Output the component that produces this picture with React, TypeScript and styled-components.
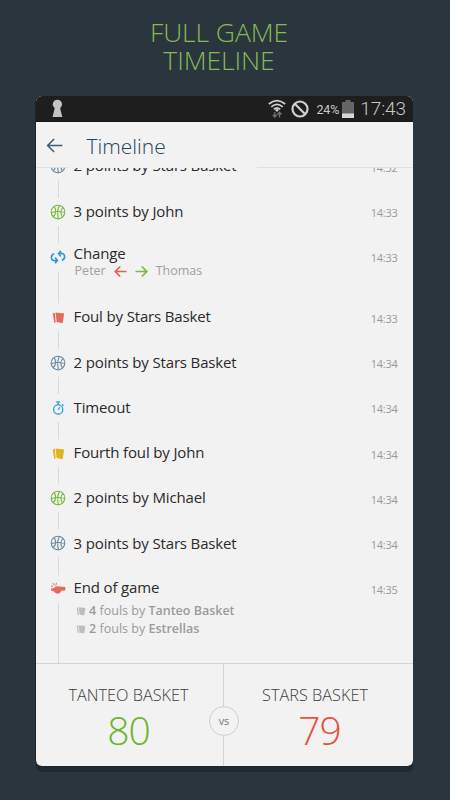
import React from 'react';
import styled, { createGlobalStyle } from 'styled-components';

const GlobalStyle = createGlobalStyle`
  * { box-sizing: border-box; }
  body { margin: 0; background: #2b353e; font-family: "Open Sans", sans-serif; }
`;

const Page = styled.main`
  width: 450px;
  height: 800px;
  overflow: hidden;
  background: #2b353e;
  display: flex;
  flex-direction: column;
  align-items: center;
`;

const Headline = styled.h1`
  margin: 0;
  height: 96px;
  padding-top: 18px;
  color: #84ba55;
  font-size: 26.5px;
  font-weight: 300;
  line-height: 28px;
  text-align: center;
  letter-spacing: -0.1px;
  padding-right: 12px;
`;

const Phone = styled.section`
  width: 377px;
  height: 670px;
  display: flex;
  flex-direction: column;
  overflow: hidden;
  flex: none;
  border-radius: 6px;
  background: #f2f2f2;
`;

const Shadow = styled.div`
  border-radius: 6px;
  margin-right: 1px;
  box-shadow: 0 6px 0 #202930, 0 1px 0 #121c25, -1px 0 0 #1a242c;
`;

const StatusBar = styled.div`
  height: 26px;
  flex: none;
  background: #1e1e1e;
  border-bottom: 1px solid #151515;
  color: #c8c8c8;
  display: flex;
  align-items: center;
  font-family: Roboto, sans-serif;
  padding: 0 7px 0 16px;
`;

const Spacer = styled.span`
  flex: 1;
`;

const Percent = styled.span`
  font-size: 12.5px;
  margin: 1px 3px 0 7px;
  letter-spacing: -0.1px;
`;

const Clock = styled.span`
  font-size: 19px;
  font-weight: 300;
  margin-left: 6px;
  letter-spacing: -0.1px;
  line-height: 24px;
`;

const AppBar = styled.header`
  height: 45px;
  flex: none;
  display: flex;
  align-items: center;
  padding: 2px 0 0 10px;
  gap: 23.5px;
  color: #24455e;
`;

const Title = styled.h2`
  margin: 0;
  font-size: 21px;
  font-weight: 300;
  line-height: 28px;
`;

const Divider = styled.div`
  height: 1px;
  flex: none;
  background: linear-gradient(90deg, #e0e0e0 33px, transparent 33px 221px, #e0e0e0 221px);
`;

const List = styled.div`
  flex: 1;
  min-height: 0;
  overflow: hidden;
`;

const Row = styled.div<{ $height: number; $first?: boolean }>`
  display: grid;
  grid-template-columns: 37.6px 1fr auto;
  height: ${(p) => p.$height}px;
  margin-top: ${(p) => (p.$first ? -24.7 : 0)}px;
  padding-right: 15.5px;
`;

const Rail = styled.div`
  width: 44px;
  display: flex;
  flex-direction: column;
  align-items: center;
  &::before, &::after {
    content: "";
    width: 1px;
    background: #d3dbe1;
  }
  &::before { height: 9px; }
  &::after { flex: 1; }
`;

const IconBox = styled.div`
  height: 28px;
  display: flex;
  align-items: center;
  justify-content: center;
`;

const Body = styled.div<{ $lift: number }>`
  padding-top: ${(p) => 12.1 - p.$lift}px;
`;

const Label = styled.div`
  font-size: 15px;
  line-height: 21px;
  color: #2a2a2a;
  white-space: nowrap;
  letter-spacing: -0.15px;
`;

const Time = styled.time`
  font-size: 11px;
  line-height: 16px;
  padding-top: 16.5px;
  color: #999;
  letter-spacing: -0.25px;
`;

const Swap = styled.div`
  display: flex;
  align-items: center;
  gap: 8px;
  padding-left: 1px;
  margin-top: -2px;
  color: #a0a0a0;
  font-size: 12.5px;
  line-height: 18px;
`;

const Note = styled.div`
  display: flex;
  align-items: center;
  gap: 3px;
  padding-left: 2.5px;
  font-size: 12.5px;
  line-height: 18px;
  color: #9b9b9b;
  b { font-weight: 600; }
`;

const Notes = styled.div`
  margin-top: 3.5px;
`;

const Score = styled.footer`
  height: 103px;
  flex: none;
  border-top: 1px solid #d4d4d4;
  display: grid;
  grid-template-columns: 187px 1px 189px;
  position: relative;
`;

const Team = styled.div<{ $left?: boolean }>`
  display: flex;
  flex-direction: column;
  align-items: center;
  padding-top: 20px;
  padding-right: ${(p) => (p.$left ? 2 : 7)}px;
`;

const TeamName = styled.div`
  color: #3c3c3c;
  font-size: 16.3px;
  font-weight: 300;
  line-height: 22px;
`;

const Points = styled.div<{ $color: string; $shift?: number }>`
  color: ${(p) => p.$color};
  font-size: 39px;
  font-weight: 300;
  line-height: 48px;
  letter-spacing: -1px;
  padding-left: ${(p) => p.$shift ?? 0}px;
`;

const Split = styled.div`
  background: #d4d4d4;
`;

const Versus = styled.div`
  position: absolute;
  left: 173px;
  top: 42px;
  width: 30px;
  height: 30px;
  border: 1px solid #cfcfcf;
  border-radius: 50%;
  background: #f2f2f2;
  color: #777;
  font-size: 11px;
  line-height: 28px;
  text-align: center;
`;

const GREEN = '#78b93e';
const SLATE = '#6e8ba3';
const RED = '#e66a5c';

const Ball = ({ color }: { color: string }) => (
  <svg width="16" height="16" viewBox="0 0 16 16" fill="none" stroke={color} strokeWidth="1.15">
    <circle cx="8" cy="8" r="6.8" />
    <path d="M9.5 1.3C7.5 5 7.5 11 8.5 14.7M1.3 8.7C5 7.4 11 7.4 14.8 8.3M4 2.6C6.8 5.6 6 10.4 3.1 12.8M13 3.3C10.2 5.9 10.4 10.8 12.6 13" />
  </svg>
);

const Cards = ({ color, size = 13 }: { color: string; size?: number }) => (
  <svg width={size} height={size} viewBox="0 0 13 13" fill={color}>
    <path d="M3.6 1.6 12.2 2.6 10.6 12.2 4.6 11Z" />
    <path d="M.8 2.4 2.8 1.8 3.7 10.9 3.4 11.6 2.2 11.8Z" />
  </svg>
);

const Change = () => (
  <svg width="16" height="14" viewBox="0 0 16 14" fill="none" stroke="#2f95d3" strokeWidth="1.6">
    <path d="M4.2 3.8C.6 4.6.5 9.6 3.6 10.6H7M5.2 7.6 7.4 10.4 5.2 13.2M11.8 10.2C15.4 9.4 15.5 4.4 12.4 3.4H9M10.8.8 8.6 3.6 10.8 6.4" />
  </svg>
);

const Stopwatch = () => (
  <svg width="13" height="14" viewBox="0 0 13 14" fill="none" stroke="#38a5e3" strokeWidth="1.4">
    <circle cx="6.2" cy="8.4" r="4.6" />
    <path d="M4.2 1H8.2M6.2 1V3.8M10 3.2 11.5 4.7M6 8.6 8 6.3" />
  </svg>
);

const Whistle = ({ color }: { color: string }) => (
  <svg width="16" height="13" viewBox="0 0 16 13">
    <path d="M6 4.2 15.3 5V8.4L11.2 8.7C10.6 12.4 5.4 12.8 4.3 9.6L1 8.4V6.6L3.6 6.2Z" fill={color} />
    <path d="M1 3.7 3 5M3.1 1 4.3 3.5M6.5.8 5.8 3.4" stroke={color} strokeWidth="1" />
  </svg>
);

const Arrow = ({ color, flip, size = 13, weight = 1.7 }: { color: string; flip?: boolean; size?: number; weight?: number }) => (
  <svg width={size} height={size} viewBox="0 0 13 13" fill="none" stroke={color} strokeWidth={weight}>
    <path d={flip ? 'M.5 6.5H11.8M6.8 1.5 11.8 6.5 6.8 11.5' : 'M12.5 6.5H1.2M6.2 1.5 1.2 6.5 6.2 11.5'} />
  </svg>
);

const Keyhole = () => (
  <svg width="11" height="19" viewBox="0 0 11 19" fill="#c4c4c4">
    <circle cx="5.4" cy="5.3" r="4.6" />
    <path d="M3 8H7.8L10.3 18H.5Z" />
  </svg>
);

const Wifi = () => (
  <svg width="18" height="20" viewBox="0 0 18 20" fill="none" stroke="#d0d0d0" strokeWidth="1.7">
    <path d="M.8 5Q9-1.8 17.2 5M3.3 7.8Q9 2.8 14.7 7.8M5.8 10.3Q9 7.5 12.2 10.3" />
    <path d="M7 11 9 9.5 11 11 9 13Z" fill="#d0d0d0" stroke="none" />
    <path d="M6.8 13V18M4.8 15.8 6.8 18 8.8 15.8M11.5 18.5V13.5M9.5 15.5 11.5 13.3 13.5 15.5" stroke="#737373" strokeWidth="1.3" />
  </svg>
);

const Blocked = styled.svg`
  margin-left: 5px;
`;

const Battery = () => (
  <svg width="12" height="18" viewBox="0 0 12 18">
    <path d="M3.5 0H8.5V2H12V18H0V2H3.5Z" fill="#656565" />
    <path d="M0 13.5H12V18H0Z" fill="#d7d7d7" />
  </svg>
);

interface Entry {
  text: string;
  time: string;
  icon: React.ReactNode;
  height: number;
  lift?: number;
  detail?: React.ReactNode;
}

const entries: Entry[] = [
  { text: '2 points by Stars Basket', time: '14:32', icon: <Ball color={SLATE} />, height: 45.2, lift: 0.8 },
  { text: '3 points by John', time: '14:33', icon: <Ball color={GREEN} />, height: 45.3 },
  {
    text: 'Change', time: '14:33', icon: <Change />, height: 60.5, lift: 2.4,
    detail: (
      <Swap>
        Peter <Arrow color="#e5604f" /> <Arrow color="#78b93e" flip /> Thomas
      </Swap>
    ),
  },
  { text: 'Foul by Stars Basket', time: '14:33', icon: <Cards color={RED} />, height: 45.3 },
  { text: '2 points by Stars Basket', time: '14:34', icon: <Ball color={SLATE} />, height: 45.3, lift: -0.3 },
  { text: 'Timeout', time: '14:34', icon: <Stopwatch />, height: 45.2 },
  { text: 'Fourth foul by John', time: '14:34', icon: <Cards color="#e2b31a" />, height: 45.2 },
  { text: '2 points by Michael', time: '14:34', icon: <Ball color={GREEN} />, height: 45.2 },
  { text: '3 points by Stars Basket', time: '14:34', icon: <Ball color={SLATE} />, height: 45.3, lift: -0.3 },
  {
    text: 'End of game', time: '14:35', icon: <Whistle color={RED} />, height: 98, lift: 0.6,
    detail: (
      <Notes>
        <Note><Cards color="#bdbdbd" size={10} /><span><b>4</b> fouls by <b>Tanteo Basket</b></span></Note>
        <Note><Cards color="#bdbdbd" size={10} /><span><b>2</b> fouls by <b>Estrellas</b></span></Note>
      </Notes>
    ),
  },
];

export default function App() {
  return (
    <Page>
      <GlobalStyle />
      <Headline>FULL GAME<br />TIMELINE</Headline>
      <Shadow>
        <Phone>
          <StatusBar>
            <Keyhole />
            <Spacer />
            <Wifi />
            <Blocked width="18" height="18" viewBox="0 0 18 18" fill="none" stroke="#d0d0d0" strokeWidth="2.2">
              <circle cx="9" cy="9" r="7.5" />
              <path d="M3.8 3.8 14.2 14.2" />
            </Blocked>
            <Percent>24%</Percent>
            <Battery />
            <Clock>17:43</Clock>
          </StatusBar>
          <AppBar>
            <Arrow color="#3d5a70" size={17} weight={1.15} />
            <Title>Timeline</Title>
          </AppBar>
          <Divider />
          <List>
            {entries.map((e, i) => (
              <Row key={i} $height={e.height} $first={i === 0}>
                <Rail><IconBox>{e.icon}</IconBox></Rail>
                <Body $lift={e.lift ?? 0}>
                  <Label>{e.text}</Label>
                  {e.detail}
                </Body>
                <Time>{e.time}</Time>
              </Row>
            ))}
          </List>
          <Score>
            <Team $left>
              <TeamName>TANTEO BASKET</TeamName>
              <Points $color="#6eb52b">80</Points>
            </Team>
            <Split />
            <Team>
              <TeamName>STARS BASKET</TeamName>
              <Points $color="#ea503c" $shift={9}>79</Points>
            </Team>
            <Versus>vs</Versus>
          </Score>
        </Phone>
      </Shadow>
    </Page>
  );
}
